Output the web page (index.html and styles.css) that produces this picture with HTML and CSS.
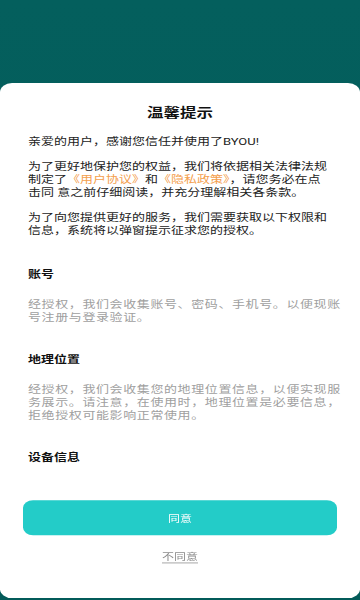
FILE: index.html
```html
<!DOCTYPE html>
<html lang="zh-CN">
<head>
<meta charset="utf-8">
<title>温馨提示</title>
<link rel="stylesheet" href="styles.css">
</head>
<body>
<div class="screen">
  <div class="card">
    <h1 class="title">温馨提示</h1>
    <div class="scroll">
      <p class="para">亲爱的用户，感谢您信任并使用了BYOU!</p>
      <p class="para">为了更好地保护您的权益，我们将依据相关法律法规<br>制定了<span class="link">《用户协议》</span>和<span class="link">《隐私政策》</span>，请您务必在点<br>击同 意之前仔细阅读，并充分理解相关各条款。</p>
      <p class="para">为了向您提供更好的服务，我们需要获取以下权限和<br>信息，系统将以弹窗提示征求您的授权。</p>
      <div class="section">
        <h2 class="sec-title">账号</h2>
        <p class="sec-desc">经授权，我们会收集账号、密码、手机号。以便现账<br>号注册与登录验证。</p>
      </div>
      <div class="section">
        <h2 class="sec-title">地理位置</h2>
        <p class="sec-desc">经授权，我们会收集您的地理位置信息，以便实现服<br>务展示。请注意，在使用时，地理位置是必要信息，<br>拒绝授权可能影响正常使用。</p>
      </div>
      <div class="section">
        <h2 class="sec-title">设备信息</h2>
      </div>
    </div>
    <div class="footer">
      <button class="agree" type="button">同意</button>
      <a class="disagree" href="#">不同意</a>
    </div>
  </div>
</div>
</body>
</html>
```
FILE: styles.css
```css
* { box-sizing: border-box; }
html, body {
  margin: 0;
  padding: 0;
}
body {
  width: 360px;
  height: 600px;
  overflow: hidden;
  font-family: Roboto, "Noto Sans CJK SC", sans-serif;
  background: linear-gradient(180deg, #045f5d 0%, #035b59 100%);
}
.screen {
  height: 600px;
  padding-top: 83px;
}
/* the reference is a phone capture squeezed vertically: lay out at phone
   proportions, then compress the card to the captured aspect */
.card {
  height: 678px;
  background: #ffffff;
  border-radius: 12px;
  padding-top: 28px;
  display: flex;
  flex-direction: column;
  transform: scaleY(0.76);
  transform-origin: top center;
}
.title {
  margin: 0;
  text-align: center;
  font-size: 16.5px;
  line-height: 24px;
  font-weight: 700;
  color: #111;
}
.scroll {
  margin-top: 17px;
  height: 456px;
  overflow: hidden;
  padding: 0 20px 0 28px;
}
.para {
  margin: 0 0 16px;
  font-size: 13px;
  line-height: 17px;
  color: #222;
  white-space: nowrap;
}
.link {
  color: #f4a04e;
}
.section {
  margin-top: 38px;
}
.para + .section {
  margin-top: 40px;
}
.sec-title {
  margin: 0 0 20px;
  font-size: 13px;
  line-height: 20px;
  font-weight: 700;
  color: #111;
}
.sec-desc {
  margin: 0;
  font-size: 13px;
  line-height: 17px;
  color: #a0a0a0;
  letter-spacing: 0.6px;
  white-space: nowrap;
}
.footer {
  padding: 24px 23px 0;
  display: flex;
  flex-direction: column;
  align-items: center;
}
.agree {
  width: 100%;
  height: 46px;
  border: none;
  border-radius: 10px;
  background: #23ccc8;
  color: #fff;
  font-family: inherit;
  font-size: 12px;
  padding: 0;
}
.disagree {
  margin-top: 18px;
  font-size: 12px;
  line-height: 20px;
  color: #8c8c8c;
  text-decoration: underline;
  text-underline-offset: 4px;
  text-decoration-thickness: 1px;
}
```
